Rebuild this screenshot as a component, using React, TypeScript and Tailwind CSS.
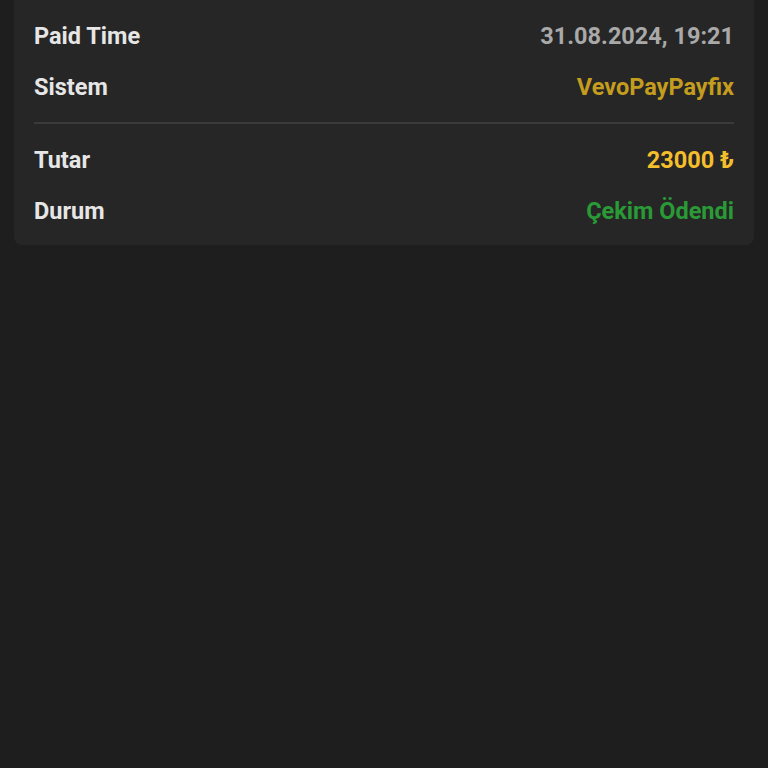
import React from "react";

function Row({ label, value, valueClass }: { label: string; value: string; valueClass: string }) {
  return (
    <div className="flex h-[51px] items-center justify-between">
      <span className="text-[#e6e6e6]">{label}</span>
      <span className={valueClass}>{value}</span>
    </div>
  );
}

export default function App() {
  return (
    <div
      className="min-h-[768px] w-full bg-[#1e1e1e]"
      style={{ fontFamily: "Roboto, 'Noto Sans', sans-serif" }}
    >
      <div className="mx-[14px] rounded-b-[8px] bg-[#262626] px-[20px] pt-[11px] pb-[8px] text-[23.5px] font-bold leading-none">
        <Row label="Paid Time" value="31.08.2024, 19:21" valueClass="text-[#a9a9a9]" />
        <Row label="Sistem" value="VevoPayPayfix" valueClass="text-[#c49c1e]" />
        <div className="mt-[9px] mb-[11px] h-[2px] bg-[#3a3a3a]" />
        <Row label="Tutar" value="23000 ₺" valueClass="text-[#f4be2c]" />
        <Row label="Durum" value="Çekim Ödendi" valueClass="text-[#2a9a36]" />
      </div>
    </div>
  );
}
